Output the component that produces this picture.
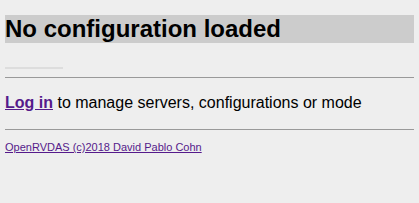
export default function App() {
  return (
    <div className="min-h-screen bg-[#eeeeee] px-[5px] pt-[15px] font-['Liberation_Sans',Arial,sans-serif] text-black">
      <h1 className="h-[28px] bg-[#cccccc] text-[24px] leading-[28px] font-bold">
        No configuration loaded
      </h1>
      <div className="mt-[24px] h-[2px] w-[58px] bg-[#dddddd]" />
      <div className="mt-[8px] h-px bg-[#999999]" />
      <p className="mt-[16px] text-[16px] leading-[18px]">
        <a href="#" className="font-bold text-[#551a8b] underline">
          Log in
        </a>{" "}
        to manage servers, configurations or mode
      </p>
      <div className="mt-[17px] h-px bg-[#999999]" />
      <p className="mt-[11px] text-[11px] leading-[13px]">
        <a href="#" className="text-[#551a8b] underline">
          OpenRVDAS (c)2018 David Pablo Cohn
        </a>
      </p>
    </div>
  );
}
